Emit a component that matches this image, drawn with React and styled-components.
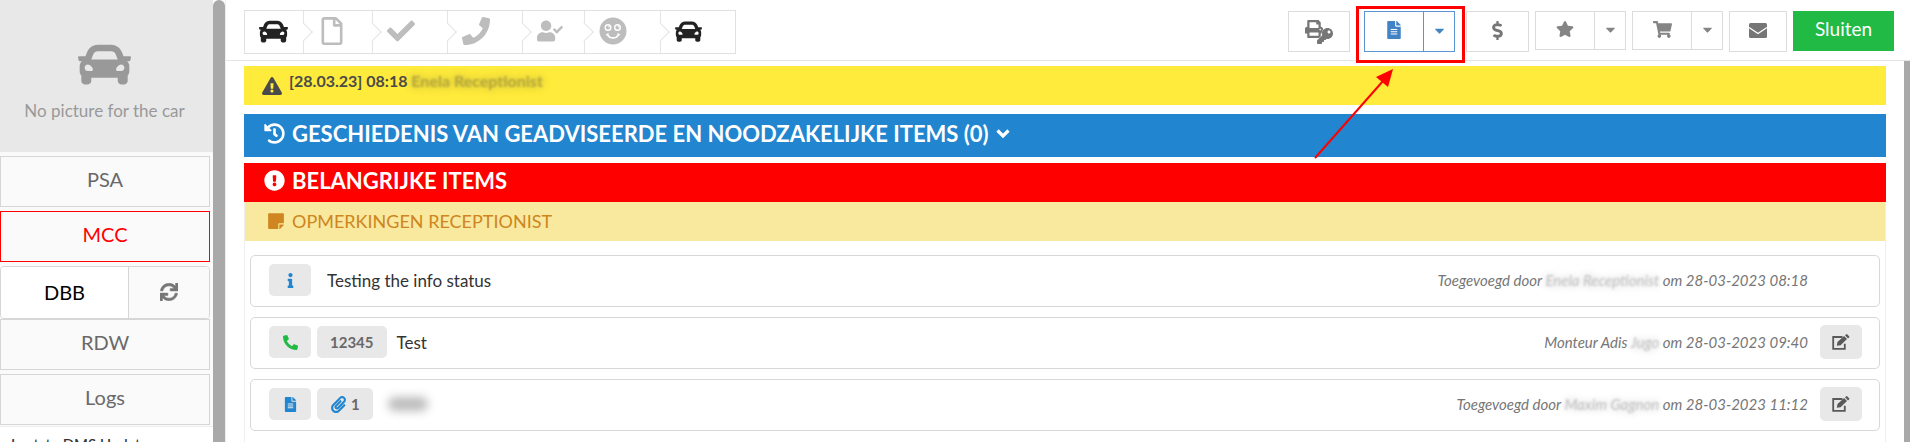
import styled, { createGlobalStyle, css } from "styled-components";
import {
    FaCar, FaRegFile, FaCheck, FaPhone, FaUserCheck, FaExclamationTriangle, FaHistory,
    FaExclamationCircle, FaStickyNote, FaInfo, FaPhoneAlt, FaFileAlt, FaPaperclip, FaSync,
    FaPrint, FaKey, FaDollarSign, FaStar, FaCaretDown, FaShoppingCart
} from "react-icons/fa";

const GlobalStyle = createGlobalStyle`
    * {
        box-sizing: border-box;
    }
    body {
        margin: 0;
        overflow: hidden;
        background-color: #fff;
        color: #333;
        font-family: Lato, "Liberation Sans", sans-serif;
    }
    button {
        font-family: inherit;
        cursor: pointer;
    }
    svg {
        display: block;
        flex-shrink: 0;
    }
`;

const Page = styled.div`
    display: flex;
    height: 100vh;
    overflow: hidden;
`;

const Sidebar = styled.aside`
    width: 213px;
    flex-shrink: 0;
    background-color: #fafafa;
`;

const CarPicture = styled.div`
    display: flex;
    flex-direction: column;
    align-items: center;
    height: 152px;
    padding: 38px 4px 0 0;
    margin-bottom: 4px;
    background-color: #e8e8e8;
    color: #999;
    font-size: 17px;
    line-height: 24px;
    & svg {
        margin-bottom: 8px;
    }
`;

const SideList = styled.nav`
    display: flex;
    flex-direction: column;
    gap: 4px;
    padding-right: 3px;
`;

const SideButton = styled.button`
    height: 51px;
    padding: 0 0 5px;
    border: 1px solid ${(p) => (p.$active ? '#f00' : '#d6d6d6')};
    background-color: #fafafa;
    color: ${(p) => (p.$active ? '#f00' : '#696969')};
    font-size: 20px;
`;

const SplitRow = styled.div`
    display: flex;
    height: 53px;
    margin-bottom: -4px;
    border: 1px solid #d6d6d6;
    border-radius: 4px;
    overflow: hidden;
    & button {
        display: flex;
        align-items: center;
        justify-content: center;
        padding-bottom: 3px;
        border: 0;
        font-size: 20px;
    }
`;

const DbbButton = styled.button`
    flex: 1;
    background-color: #fff;
    color: #000;
`;

const RefreshButton = styled.button`
    width: 81px;
    background-color: #fafafa;
    color: #777;
    border-left: 1px solid #d6d6d6 !important;
    & svg {
        stroke: currentColor;
        stroke-width: 16;
    }
`;

const DmsUpdate = styled.div`
    margin-top: 1px;
    padding: 6px 11px;
    border-top: 1px solid #eee;
    background-color: #fff;
    font-size: 15px;
    line-height: 22px;
    font-weight: 500;
`;

const ScrollTrack = styled.div`
    width: ${(p) => p.$width}px;
    flex-shrink: 0;
    background-color: #a9a9a9;
    border-radius: ${(p) => (p.$rounded ? '6px 6px 0 0' : 0)};
`;

const Main = styled.main`
    flex: 1;
    min-width: 0;
    display: flex;
    flex-direction: column;
    border-left: 1px solid #eee;
`;

const TopBar = styled.header`
    display: flex;
    justify-content: space-between;
    align-items: flex-start;
    height: 61px;
    flex-shrink: 0;
    padding: 10px 16px 0 18px;
    border-bottom: 1px solid #e4e4e4;
`;

const Steps = styled.ol`
    display: flex;
    height: 44px;
    margin: 0;
    padding: 0;
    list-style: none;
    border: 1px solid #e0e0e0;
`;

const Step = styled.li`
    position: relative;
    display: flex;
    align-items: center;
    width: ${(p) => p.$width}px;
    padding: 0 0 2px 14px;
    color: ${(p) => (p.$done ? '#222' : '#bdbdbd')};
    & svg {
        width: auto;
    }
    &:not(:last-child) {
        border-right: 1px solid #e4e4e4;
    }
    &:not(:last-child)::after {
        content: "";
        position: absolute;
        z-index: 1;
        top: 14px;
        right: -7px;
        width: 13px;
        height: 13px;
        background-color: #fff;
        border: solid #e4e4e4;
        border-width: 1px 1px 0 0;
        transform: rotate(45deg);
    }
`;

const Actions = styled.div`
    display: flex;
    align-items: flex-start;
    gap: 6px;
    padding-top: 1px;
`;

const actionBox = css`
    display: flex;
    align-items: center;
    justify-content: center;
    padding: 0 0 3px;
    background-color: #fff;
    border: 1px solid #dcdcdc;
    color: ${(p) => p.$color || '#767676'};
`;

const ActionButton = styled.button`
    ${actionBox}
    width: ${(p) => p.$width}px;
    height: 41px;
`;

const SplitAction = styled.div`
    position: relative;
    display: flex;
    height: ${(p) => (p.$selected ? 41 : 39)}px;
    & button {
        ${actionBox}
        color: ${(p) => (p.$selected ? '#4183c4' : '#858585')};
        border-color: ${(p) => (p.$selected ? '#5b96d2' : '#dcdcdc')};
    }
    & button:first-child {
        width: 60px;
    }
    & button:last-child {
        width: 32px;
        margin-left: -1px;
    }
`;

const SelectedWrap = styled.div`
    position: relative;
    padding: 0 5px 0 8px;
`;

const Highlight = styled.span`
    position: absolute;
    top: -5px;
    right: -5px;
    bottom: -11px;
    left: 0;
    border: 3px solid #f00;
    pointer-events: none;
`;

const Pointer = styled.svg`
    position: absolute;
    z-index: 5;
    top: 58px;
    left: -43px;
    pointer-events: none;
`;

const CloseButton = styled.button`
    width: 101px;
    height: 40px;
    padding: 0 0 5px;
    border: 0;
    background-color: #21ba45;
    color: #fff;
    font-size: 19px;
`;

const Scroller = styled.div`
    display: flex;
    flex: 1;
    min-height: 0;
`;

const Content = styled.div`
    flex: 1;
    min-width: 0;
    padding: 5px 18px 0;
`;

const Notice = styled.div`
    display: flex;
    align-items: flex-start;
    gap: 7px;
    height: 39px;
    padding: 3px 18px;
    margin-bottom: 9px;
    background-color: #ffeb3b;
    color: #4a4a4a;
    font-size: 16px;
    line-height: 24px;
    font-weight: bold;
    & svg {
        margin-top: 7px;
    }
`;

const Smudge = styled.span`
    color: ${(p) => p.$color || '#c0c0c0'};
    text-shadow: 0 0 8px currentColor;
    filter: blur(1px);
`;

const Banner = styled.h2`
    display: flex;
    align-items: center;
    gap: 7px;
    height: ${(p) => p.$height}px;
    margin: 0 0 ${(p) => p.$gap || 0}px;
    padding: 0 20px 4px;
    background-color: ${(p) => p.$bg};
    color: #fff;
    font-size: 22px;
    line-height: 28px;
    font-weight: bold;
`;

const SubBanner = styled.h3`
    display: flex;
    align-items: center;
    gap: 7px;
    height: 39px;
    margin: 0;
    padding: 0 22px 2px;
    background-color: #f8e99e;
    color: #cf8520;
    font-size: 18px;
    font-weight: normal;
`;

const Panel = styled.section`
    border: solid #eee;
    border-width: 0 1px;
`;

const Items = styled.ul`
    display: flex;
    flex-direction: column;
    gap: 10px;
    margin: 0;
    padding: 14px 5px;
    list-style: none;
`;

const Item = styled.li`
    display: flex;
    align-items: center;
    height: 52px;
    padding: 0 17px 2px 18px;
    border: 1px solid #d8d8d8;
    border-radius: 5px;
`;

const Tag = styled.span`
    display: flex;
    align-items: center;
    justify-content: center;
    gap: 4px;
    min-width: 42px;
    height: 32px;
    padding: 0 13px;
    margin-right: 6px;
    border-radius: 5px;
    background-color: #e8e8e8;
    color: #696969;
    font-size: 15px;
    font-weight: bold;
`;

const ItemText = styled.span`
    margin-left: ${(p) => p.$indent || 4}px;
    color: #333;
    font-size: 17px;
`;

const Blot = styled.span`
    width: 40px;
    height: 14px;
    margin-left: 9px;
    border-radius: 7px;
    background-color: #bbb;
    filter: blur(5px);
`;

const Author = styled.em`
    margin: 0 ${(p) => (p.$alone ? 54 : 12)}px 0 auto;
    color: #767676;
    font-size: 15px;
`;

const EditButton = styled.button`
    display: flex;
    align-items: center;
    justify-content: center;
    width: 42px;
    height: 34px;
    padding: 0;
    border: 0;
    border-radius: 5px;
    background-color: #e8e8e8;
    color: #595959;
`;

const SmileIcon = () => (
    <svg width="28" height="28" viewBox="0 0 28 28" fill="none" stroke="#fff">
        <circle cx="14" cy="14" r="13.5" fill="currentColor" stroke="none" />
        <circle cx="9" cy="10.5" r="2.8" strokeWidth="1.4" />
        <circle cx="18.5" cy="10.5" r="2.8" strokeWidth="1.4" />
        <circle cx="10" cy="9.7" r="0.8" fill="#fff" stroke="none" />
        <circle cx="19.5" cy="9.7" r="0.8" fill="#fff" stroke="none" />
        <path d="M8.5 17.5c2 4.6 9 4.6 11 0" strokeWidth="1.8" />
        <path d="M7 18l2.6-1.4M18.4 16.6L21 18" strokeWidth="1.2" />
    </svg>
);

const EditIcon = () => (
    <svg width="18" height="17" viewBox="0 0 18 17">
        <path d="M10.5 3H1.2v11.8h11.6V9.8" fill="none" stroke="currentColor" strokeWidth="1.8" />
        <path d="M4.8 11.8l.7-3.8 6.6-6 2.9 3-6.4 6.2zM13 1.3l1-.9q.7-.6 1.4.1l1.7 1.7q.6.6 0 1.2l-1.1 1.1z" fill="currentColor" />
    </svg>
);

const MailIcon = () => (
    <svg width="18" height="15" viewBox="0 0 18 15">
        <rect width="18" height="15" rx="1.5" fill="currentColor" />
        <path d="M0 4.5l9 6 9-6" fill="none" stroke="#fff" strokeWidth="1.4" />
    </svg>
);

const ChevronIcon = () => (
    <svg width="14" height="10" viewBox="0 0 14 10">
        <path d="M1.5 1.5L7 7l5.5-5.5" fill="none" stroke="currentColor" strokeWidth="3.2" />
    </svg>
);

const PrintKey = styled.span`
    position: relative;
    width: 28px;
    height: 24px;
    margin-top: 3px;
    & svg:last-child {
        position: absolute;
        right: 0;
        bottom: 0;
        stroke: #fff;
        stroke-width: 24;
        paint-order: stroke;
    }
`;

const steps = [
    { label: 'Aankomst', icon: <FaCar size={29} />, width: 59, done: true },
    { label: 'Document', icon: <FaRegFile size={28} />, width: 69 },
    { label: 'Controle', icon: <FaCheck size={28} />, width: 75 },
    { label: 'Telefoon', icon: <FaPhone size={28} />, width: 75 },
    { label: 'Klant', icon: <FaUserCheck size={26} />, width: 62 },
    { label: 'Tevreden', icon: <SmileIcon />, width: 76 },
    { label: 'Vertrek', icon: <FaCar size={27} />, width: 74, done: true }
];

const items = [
    {
        id: 1,
        tags: [{ icon: <FaInfo size={15} color="#2185d0" /> }],
        text: 'Testing the info status',
        indent: 10,
        before: 'Toegevoegd door ',
        name: 'Enela Receptionist',
        after: ' om 28-03-2023 08:18'
    },
    {
        id: 2,
        tags: [{ icon: <FaPhoneAlt size={15} color="#21ba45" /> }, { text: '12345' }],
        text: 'Test',
        before: 'Monteur Adis ',
        name: 'Jugo',
        after: ' om 28-03-2023 09:40',
        editable: true
    },
    {
        id: 3,
        tags: [{ icon: <FaFileAlt size={15} color="#2185d0" /> }, { icon: <FaPaperclip size={17} color="#2185d0" />, text: '1' }],
        before: 'Toegevoegd door ',
        name: 'Maxim Gagnon',
        after: ' om 28-03-2023 11:12',
        editable: true
    }
];

const App = () => {
    return (
        <Page>
            <GlobalStyle />
            <Sidebar>
                <CarPicture>
                    <FaCar size={53} />
                    No picture for the car
                </CarPicture>
                <SideList>
                    <SideButton>PSA</SideButton>
                    <SideButton $active>MCC</SideButton>
                    <SplitRow>
                        <DbbButton>DBB</DbbButton>
                        <RefreshButton aria-label="Vernieuwen"><FaSync size={18} /></RefreshButton>
                    </SplitRow>
                    <SideButton>RDW</SideButton>
                    <SideButton>Logs</SideButton>
                </SideList>
                <DmsUpdate>Laatste DMS Update</DmsUpdate>
            </Sidebar>
            <ScrollTrack $width={12} $rounded />
            <Main>
                <TopBar>
                    <Steps>
                        {
                            steps.map((s) => (
                                <Step key={s.label} aria-label={s.label} $width={s.width} $done={s.done}>
                                    {s.icon}
                                </Step>
                            ))
                        }
                    </Steps>
                    <Actions>
                        <ActionButton $width={62} aria-label="Afdrukken">
                            <PrintKey>
                                <FaPrint size={18} />
                                <FaKey size={16} />
                            </PrintKey>
                        </ActionButton>
                        <SelectedWrap>
                            <SplitAction $selected>
                                <button aria-label="Document"><FaFileAlt size={18} /></button>
                                <button aria-label="Meer documenten"><FaCaretDown size={15} /></button>
                            </SplitAction>
                            <Highlight />
                            <Pointer width="84" height="92" viewBox="0 0 84 92">
                                <path d="M2 89L70 12" stroke="#f00" strokeWidth="2" />
                                <path d="M80 0L63 8L75 18Z" fill="#f00" />
                            </Pointer>
                        </SelectedWrap>
                        <ActionButton $width={63} aria-label="Prijs"><FaDollarSign size={19} /></ActionButton>
                        <SplitAction>
                            <button aria-label="Favoriet"><FaStar size={18} /></button>
                            <button aria-label="Meer favorieten"><FaCaretDown size={15} /></button>
                        </SplitAction>
                        <SplitAction>
                            <button aria-label="Winkelwagen"><FaShoppingCart size={19} /></button>
                            <button aria-label="Meer bestellingen"><FaCaretDown size={15} /></button>
                        </SplitAction>
                        <ActionButton $width={58} aria-label="E-mail"><MailIcon /></ActionButton>
                        <CloseButton>Sluiten</CloseButton>
                    </Actions>
                </TopBar>
                <Scroller>
                    <Content>
                        <Notice>
                            <FaExclamationTriangle size={20} />
                            <span>[28.03.23] 08:18 <Smudge $color="#b3a53c">Enela Receptionist</Smudge></span>
                        </Notice>
                        <Banner $bg="#2185d0" $height={43} $gap={6}>
                            <FaHistory size={21} />
                            GESCHIEDENIS VAN GEADVISEERDE EN NOODZAKELIJKE ITEMS (0)
                            <ChevronIcon />
                        </Banner>
                        <Banner $bg="#f00" $height={39}>
                            <FaExclamationCircle size={21} />
                            BELANGRIJKE ITEMS
                        </Banner>
                        <Panel>
                            <SubBanner>
                                <FaStickyNote size={18} />
                                OPMERKINGEN RECEPTIONIST
                            </SubBanner>
                            <Items>
                                {
                                    items.map((item) => (
                                        <Item key={item.id}>
                                            {item.tags.map((t, i) => (
                                                <Tag key={i}>{t.icon}{t.text}</Tag>
                                            ))}
                                            {item.text ? <ItemText $indent={item.indent}>{item.text}</ItemText> : <Blot />}
                                            <Author $alone={!item.editable}>
                                                {item.before}<Smudge>{item.name}</Smudge>{item.after}
                                            </Author>
                                            {item.editable && <EditButton aria-label="Bewerken"><EditIcon /></EditButton>}
                                        </Item>
                                    ))
                                }
                            </Items>
                        </Panel>
                    </Content>
                    <ScrollTrack $width={6} />
                </Scroller>
            </Main>
        </Page>
    );
}

export default App;
